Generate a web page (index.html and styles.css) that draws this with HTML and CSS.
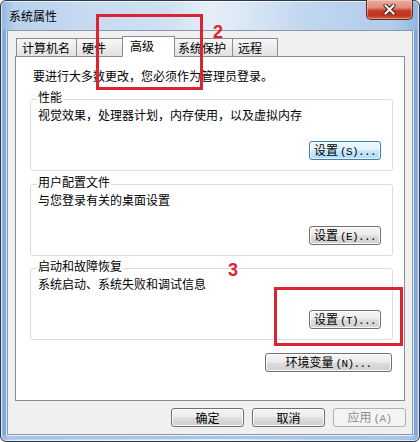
FILE: index.html
```html
<!DOCTYPE html>
<html lang="zh-CN">
<head>
<meta charset="utf-8">
<title>系统属性</title>
<link rel="stylesheet" href="styles.css">
</head>
<body>
<div class="window">
  <div class="titlebar">
    <span class="title">系统属性</span>
    <button class="close" aria-label="关闭">
      <svg width="13" height="11" viewBox="0 0 13 11">
        <path d="M2.5 1.5 L10.5 9.5 M10.5 1.5 L2.5 9.5" stroke="#4a1a12" stroke-width="4" stroke-linecap="round" fill="none"/>
        <path d="M2.5 1.5 L10.5 9.5 M10.5 1.5 L2.5 9.5" stroke="#ffffff" stroke-width="2" stroke-linecap="square" fill="none"/>
      </svg>
    </button>
  </div>
  <div class="client">
    <div class="tabs">
      <div class="tab tab-w4">计算机名</div>
      <div class="tab tab-w2">硬件</div>
      <div class="tab tab-w2 active">高级</div>
      <div class="tab tab-w4">系统保护</div>
      <div class="tab tab-last">远程</div>
    </div>
    <div class="panel">
      <p class="intro">要进行大多数更改，您必须作为管理员登录。</p>
      <div class="group">
        <div class="group-title">性能</div>
        <p class="desc">视觉效果，处理器计划，内存使用，以及虚拟内存</p>
        <div class="group-actions"><button class="btn focus">设置<span class="hk">(S)...</span></button></div>
      </div>
      <div class="group">
        <div class="group-title">用户配置文件</div>
        <p class="desc">与您登录有关的桌面设置</p>
        <div class="group-actions"><button class="btn">设置<span class="hk">(E)...</span></button></div>
      </div>
      <div class="group">
        <div class="group-title">启动和故障恢复</div>
        <p class="desc">系统启动、系统失败和调试信息</p>
        <div class="group-actions"><button class="btn">设置<span class="hk">(T)...</span></button></div>
      </div>
      <div class="env-row"><button class="btn btn-wide">环境变量<span class="hk">(N)...</span></button></div>
    </div>
    <div class="footer">
      <button class="btn btn-footer">确定</button>
      <button class="btn btn-footer">取消</button>
      <button class="btn btn-footer" disabled>应用<span class="hk">(A)</span></button>
    </div>
  </div>
  <div class="mark mark-tab"></div>
  <div class="num num-2">2</div>
  <div class="num num-3">3</div>
  <div class="mark mark-btn"></div>
</div>
</body>
</html>
```

FILE: styles.css
```css
* { box-sizing: border-box; }

html, body {
  margin: 0;
  padding: 0;
  background: #ffffff;
}

body {
  width: 420px;
  height: 442px;
  overflow: hidden;
  font-family: "Noto Sans CJK SC", "Liberation Sans", sans-serif;
  font-size: 12px;
  color: #000;
}

.window {
  position: relative;
  width: 420px;
  height: 442px;
  display: flex;
  flex-direction: column;
  padding: 0 6px 6px 6px;
  border: 1px solid #2e3a48;
  border-radius: 6px;
  background:
    linear-gradient(to right,
      #8fb5e1 0%, #b9d1ec 3%, #c6daf0 20%, #cfe0f3 40%,
      #e6eef8 50%, #dbe8f5 58%, #c2d7ef 72%, #b1cbea 94%, #8fb5e1 100%);
  box-shadow: inset 0 0 0 1px rgba(255, 255, 255, 0.65);
}

.titlebar {
  height: 29px;
  display: flex;
  align-items: flex-start;
  justify-content: space-between;
}

.title {
  align-self: center;
  padding-left: 2px;
  line-height: 16px;
  font-size: 12px;
  color: #000;
}

.close {
  margin-top: -1px;
  width: 47px;
  height: 20px;
  padding: 0;
  display: flex;
  align-items: center;
  justify-content: center;
  border: 1px solid #5e2a22;
  border-top: none;
  border-radius: 0 0 5px 5px;
  background: linear-gradient(to bottom,
    #eab0a2 0%, #e08d7a 40%, #c9402a 55%, #c0321b 80%, #d2613c 100%);
  box-shadow: inset 0 0 0 1px rgba(255, 220, 210, 0.45);
}

.client {
  flex: 1;
  display: flex;
  flex-direction: column;
  background: #f0f0f0;
  border: 1px solid #8a99ab;
  box-shadow:
    -1px 0 0 rgba(255, 255, 255, 0.75),
    1px 0 0 rgba(255, 255, 255, 0.75),
    0 1px 0 rgba(255, 255, 255, 0.75),
    -4px 0 0 #7ea6da,
    4px 0 0 #7ea6da,
    0 4px 0 #a9c4e6;
}

/* Tabs */
.tabs {
  display: flex;
  align-items: flex-end;
  height: 25px;
  padding: 5px 0 0 8px;
}

.tab {
  height: 18px;
  margin-right: -1px;
  padding: 0 0 0 5px;
  line-height: 17px;
  border: 1px solid #898c95;
  border-bottom: none;
  background: linear-gradient(to bottom, #f7f7f7 0%, #ececec 50%, #e2e2e2 100%);
  white-space: nowrap;
}

.tab-w4 { width: 61px; }
.tab-w2 { width: 49px; }
.tab-last { width: 46px; }

.tab.active {
  position: relative;
  z-index: 1;
  width: 53px;
  height: 21px;
  margin: 0 -3px -1px -2px;
  padding-left: 7px;
  line-height: 18px;
  background: #ffffff;
}

/* Panel */
.panel {
  flex: 1;
  margin: 0 7px;
  padding: 11px 11px 0 14px;
  background: #ffffff;
  border: 1px solid #898c95;
}

.intro {
  margin: 0;
  padding-left: 3px;
  line-height: 15px;
  white-space: nowrap;
}

.group {
  margin-top: 13px;
  height: 72px;
  padding: 0 0 0 7px;
  border: 1px solid #d5dfe5;
  border-radius: 3px;
}

.group:first-of-type { margin-top: 16px; }
.group + .group + .group { margin-top: 12px; }

.group-title {
  width: fit-content;
  margin: -10px 0 0 -1px;
  padding: 0 1px;
  line-height: 14px;
  background: #ffffff;
  white-space: nowrap;
}

.desc {
  margin: 3px 0 0 0;
  line-height: 15px;
  white-space: nowrap;
}

.group-actions {
  display: flex;
  justify-content: flex-end;
  margin-top: 19px;
  padding-right: 11px;
}

.env-row {
  display: flex;
  justify-content: flex-end;
  margin-top: 13px;
  padding-right: 1px;
}

/* Buttons */
.btn {
  height: 19px;
  width: 72px;
  padding: 0;
  font-family: "Noto Sans CJK SC", "Liberation Sans", sans-serif;
  font-size: 12px;
  line-height: 16px;
  color: #000;
  border: 1px solid #707070;
  border-radius: 3px;
  background: linear-gradient(to bottom, #f4f4f4 0%, #ececec 48%, #dddddd 52%, #cfcfcf 100%);
  box-shadow: inset 0 0 0 1px rgba(255, 255, 255, 0.85);
  white-space: nowrap;
}

.btn.focus {
  border-color: #3c7fb1;
  background: linear-gradient(to bottom, #eef8fe 0%, #dff2fd 48%, #c4e8fd 52%, #b0dcf6 100%);
  box-shadow: inset 0 0 0 1px rgba(255, 255, 255, 0.7);
}

.btn-wide { width: 127px; }

.btn-footer { width: 73px; }

.btn:disabled {
  color: #8d8d8d;
  border-color: #adb2b5;
  background: #f4f4f4;
  box-shadow: none;
}

.hk {
  font-family: "Liberation Mono", "DejaVu Sans Mono", monospace;
  font-size: 11px;
  letter-spacing: -0.6px;
  padding-left: 2px;
}

.footer {
  display: flex;
  justify-content: flex-end;
  gap: 8px;
  padding: 7px 6px 7px 0;
}

/* Red annotations overlaid on the screenshot */
.mark {
  position: absolute;
  border: 3px solid #dc2430;
  pointer-events: none;
  z-index: 5;
}

.mark-tab {
  left: 95px;
  top: 13px;
  width: 107px;
  height: 76px;
}

.mark-btn {
  left: 273px;
  top: 286px;
  width: 129px;
  height: 59px;
}

.num {
  position: absolute;
  z-index: 5;
  font-family: "Liberation Sans", sans-serif;
  font-weight: bold;
  font-size: 18px;
  line-height: 14px;
  color: #dc2430;
}

.num-2 { left: 212px; top: 24px; }
.num-3 { left: 227px; top: 262px; }
```
